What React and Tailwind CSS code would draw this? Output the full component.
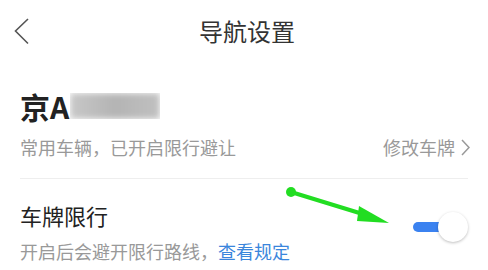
const font = {
  fontFamily: '"Noto Sans CJK SC", "Noto Sans", sans-serif',
};

export default function App() {
  return (
    <div
      className="relative w-[488px] h-[270px] overflow-hidden bg-white"
      style={font}
    >
      {/* header */}
      <div className="grid grid-cols-[1fr_auto_1fr] items-center h-[64px] pb-[2px]">
        <div className="pl-[14px]">
          <svg width="16" height="28" viewBox="0 0 16 28">
            <polyline
              points="14,2 1.5,14 14,26.5"
              fill="none"
              stroke="#555"
              strokeWidth="1.6"
            />
          </svg>
        </div>
        <h1 className="pl-[6px] text-[24px] leading-[28px] text-[#333]">
          导航设置
        </h1>
        <div />
      </div>

      {/* plate */}
      <div className="px-[20px] pt-[25px]">
        <div className="flex items-center h-[34px]">
          <span className="text-[30px] leading-[34px] font-bold text-[#222]">
            京A
          </span>
          <div className="ml-[1px] h-[26px] w-[90px] overflow-hidden">
            <div className="h-full w-full bg-gradient-to-r from-[#c8c8c8] via-[#b4b4b4] to-[#c0c0c0] blur-[3px]" />
          </div>
        </div>

        <div className="mt-[12px] flex items-center justify-between text-[18px] leading-[24px] text-[#999]">
          <span>常用车辆，已开启限行避让</span>
          <span className="flex items-center -mr-[2px]">
            修改车牌
            <svg width="9" height="17" viewBox="0 0 9 17" className="ml-[6px]">
              <polyline
                points="1,1 8,8.5 1,16"
                fill="none"
                stroke="#999"
                strokeWidth="1.5"
              />
            </svg>
          </span>
        </div>

        <div className="mt-[19px] border-t border-[#eee]" />

        {/* restriction */}
        <div className="flex items-start justify-between pt-[22px]">
          <div>
            <div className="text-[22px] leading-[28px] text-[#222]">
              车牌限行
            </div>
            <div className="mt-[10px] text-[18px] leading-[24px] text-[#999]">
              开启后会避开限行路线，
              <span className="text-[#3a86dc]">查看规定</span>
            </div>
          </div>

          <div className="relative mt-[11px] flex h-[30px] w-[57px] items-center">
            <div className="ml-[2px] h-[10px] w-[40px] rounded-full bg-[#3b82f0]" />
            <div className="absolute right-0 top-0 h-[30px] w-[30px] rounded-full bg-white shadow-[0_1px_3px_rgba(0,0,0,0.25)]" />
          </div>
        </div>
      </div>

      {/* annotation arrow */}
      <svg
        className="absolute left-0 top-0 pointer-events-none"
        width="488"
        height="270"
      >
        <line
          x1="291"
          y1="192"
          x2="366"
          y2="215"
          stroke="#22dd22"
          strokeWidth="4"
          strokeLinecap="round"
        />
        <circle cx="291" cy="192" r="5" fill="#22dd22" />
        <polygon points="359,206 389,223 357,221" fill="#22dd22" />
      </svg>
    </div>
  );
}
